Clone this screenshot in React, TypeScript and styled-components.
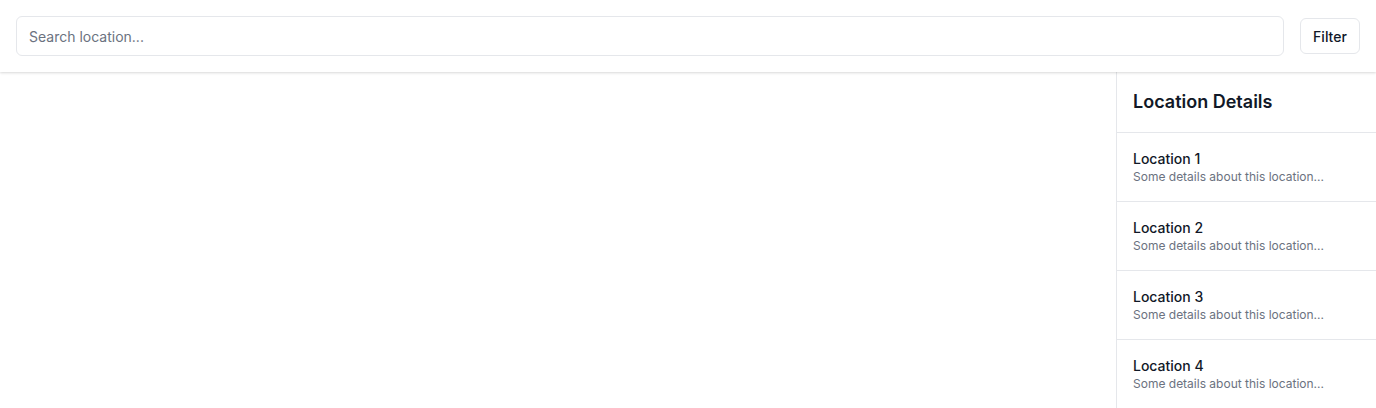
import React from "react";
import styled, { createGlobalStyle } from "styled-components";

const Global = createGlobalStyle`
  * { box-sizing: border-box; }
  html, body { margin: 0; padding: 0; height: 100%; background: #fff; }
  body { font-family: Inter, "Noto Sans", sans-serif; color: #111827; }
  #root { height: 100%; }
`;

const Page = styled.div`
  display: flex;
  flex-direction: column;
  height: 100vh;
  overflow: hidden;
`;

const TopBar = styled.header`
  display: flex;
  align-items: center;
  gap: 16px;
  padding: 16px;
  background: #fff;
  box-shadow: 0 1px 3px rgba(0, 0, 0, 0.1), 0 1px 2px rgba(0, 0, 0, 0.06);
  position: relative;
  z-index: 1;
`;

const SearchInput = styled.input`
  flex: 1;
  height: 40px;
  padding: 0 12px;
  border: 1px solid #e5e7eb;
  border-radius: 6px;
  font-family: Inter, sans-serif;
  font-size: 14px;
  color: #111827;
  outline: none;
  &::placeholder { color: #6b7280; }
`;

const FilterButton = styled.button`
  height: 36px;
  width: 60px;
  padding: 0;
  border: 1px solid #e5e7eb;
  border-radius: 6px;
  background: #fff;
  font-family: Inter, sans-serif;
  font-size: 14px;
  font-weight: 500;
  color: #111827;
`;

const Body = styled.div`
  flex: 1;
  display: flex;
  min-height: 0;
`;

const MapArea = styled.main`
  flex: 1;
  background: #fff;
`;

const Sidebar = styled.aside`
  width: 260px;
  border-left: 1px solid #e5e7eb;
  display: flex;
  flex-direction: column;
  overflow: hidden;
`;

const SidebarHeader = styled.h2`
  margin: 0;
  padding: 16px;
  font-size: 18px;
  line-height: 28px;
  font-weight: 600;
  color: #111827;
  border-bottom: 1px solid #e5e7eb;
`;

const Item = styled.div`
  padding: 16px;
  border-bottom: 1px solid #e5e7eb;
`;

const ItemTitle = styled.div`
  font-size: 14px;
  line-height: 20px;
  font-weight: 500;
  color: #111827;
`;

const ItemText = styled.div`
  font-size: 12px;
  line-height: 16px;
  color: #6b7280;
`;

const items = [1, 2, 3, 4];

export default function App() {
  return (
    <>
      <Global />
      <Page>
        <TopBar>
          <SearchInput placeholder="Search location..." />
          <FilterButton>Filter</FilterButton>
        </TopBar>
        <Body>
          <MapArea />
          <Sidebar>
            <SidebarHeader>Location Details</SidebarHeader>
            {items.map((n) => (
              <Item key={n}>
                <ItemTitle>Location {n}</ItemTitle>
                <ItemText>Some details about this location...</ItemText>
              </Item>
            ))}
          </Sidebar>
        </Body>
      </Page>
    </>
  );
}
